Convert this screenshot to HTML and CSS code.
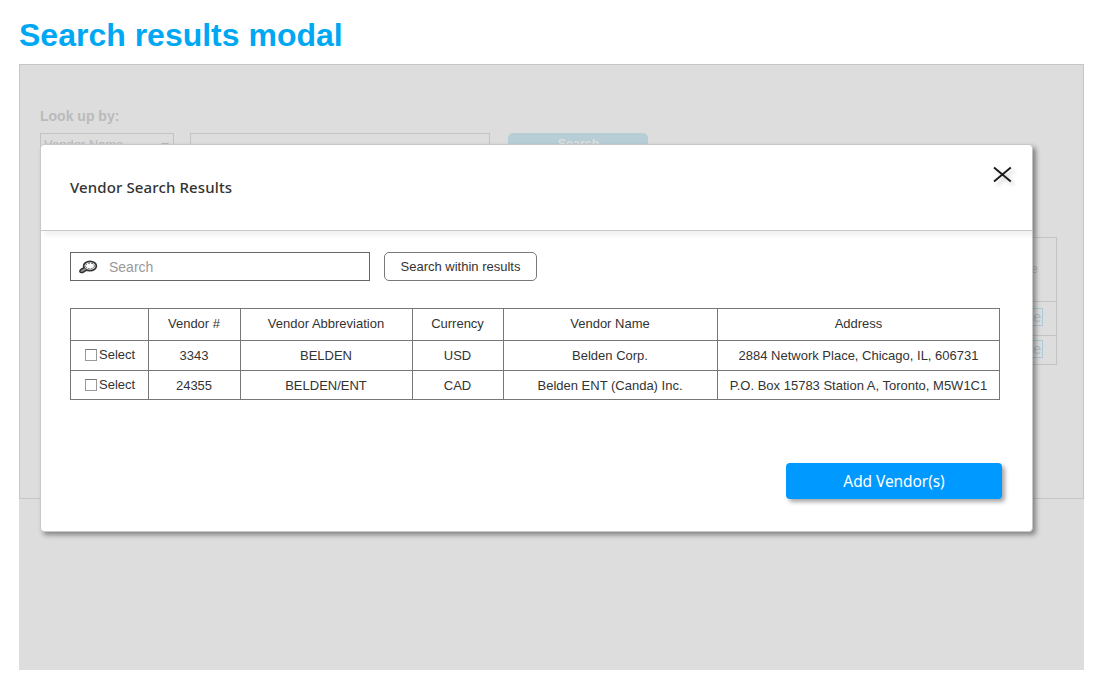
FILE: index.html
```html
<!DOCTYPE html>
<html lang="en">
<head>
<meta charset="utf-8">
<title>Search results modal</title>
<link rel="stylesheet" href="styles.css">
</head>
<body>
<h1 class="page-title">Search results modal</h1>
<main class="stage">
  <section class="panel">
    <div class="lookup-label">Look up by:</div>
    <div class="lookup-row">
      <div class="lookup-select"><span>Vendor Name</span><i class="caret"></i></div>
      <div class="lookup-input"></div>
      <div class="lookup-button">Search</div>
    </div>
    <div class="vendor-list">
      <div class="vendor-head">Remove</div>
      <div class="vendor-row first"><span class="remove">Remove</span></div>
      <div class="vendor-row"><span class="remove">Remove</span></div>
    </div>
  </section>
  <section class="modal">
    <header class="modal-header">
      <h2 class="modal-title">Vendor Search Results</h2>
      <svg class="close" width="20" height="18" viewBox="0 0 20 18"><path d="M2 2.6 18.8 16.4M18.8 2.6 2 16.4" fill="none" stroke="#1a1a1a" stroke-width="1.9"/></svg>
    </header>
    <div class="modal-body">
      <div class="search-row">
        <div class="search-box">
          <svg class="search-icon" width="20" height="14" viewBox="0 0 20 14"><ellipse cx="11" cy="6" rx="6.4" ry="4.6" fill="#fff" stroke="#333" stroke-width="1.7"/><ellipse cx="11" cy="5.9" rx="4.4" ry="2.9" fill="none" stroke="#555" stroke-width="1" stroke-dasharray="2 1"/><path d="M5.2 7.8 2.3 9.2Q-.2 11.2 1.6 12.4 3.3 12.9 4.8 11.8L7.6 10" fill="#999" stroke="#333" stroke-width="1.5"/></svg>
          <span>Search</span>
        </div>
        <div class="within-button">Search within results</div>
      </div>
      <table class="results">
        <colgroup><col class="c-select"><col class="c-number"><col class="c-abbr"><col class="c-currency"><col class="c-name"><col class="c-address"></colgroup>
        <tr class="head"><th></th><th>Vendor #</th><th>Vendor Abbreviation</th><th>Currency</th><th>Vendor Name</th><th>Address</th></tr>
        <tr class="row-one"><td><div class="pick"><i class="check"></i>Select</div></td><td>3343</td><td>BELDEN</td><td>USD</td><td>Belden Corp.</td><td>2884 Network Place, Chicago, IL, 606731</td></tr>
        <tr class="row-two"><td><div class="pick"><i class="check"></i>Select</div></td><td>24355</td><td>BELDEN/ENT</td><td>CAD</td><td>Belden ENT (Canda) Inc.</td><td>P.O. Box 15783 Station A, Toronto, M5W1C1</td></tr>
      </table>
      <div class="add-button">Add Vendor(s)</div>
    </div>
  </section>
</main>
</body>
</html>
```
FILE: styles.css
```css
* { box-sizing: border-box; }
body {
  margin: 0;
  width: 1109px;
  height: 690px;
  overflow: hidden;
  background: #fff;
  color: #333;
  font: 13px/16px "Liberation Sans", Arial, sans-serif;
}
.page-title {
  margin: 0;
  height: 64px;
  padding: 16px 0 0 19px;
  color: #00a8f3;
  font-size: 32px;
  line-height: 38px;
  font-weight: bold;
}
.stage {
  position: relative;
  width: 1065px;
  height: 606px;
  margin-left: 19px;
  background: #ddd;
}
.panel {
  height: 435px;
  padding: 43px 26px 0 20px;
  border: 1px solid #c6c6c6;
  color: #bababa;
}
.lookup-label { height: 25px; font-size: 14px; font-weight: bold; }
.lookup-row { display: flex; height: 24px; }
.lookup-select {
  display: flex;
  justify-content: space-between;
  width: 134px;
  padding: 3px 4px 0 3px;
  border: 1px solid #c3c3c3;
}
.caret {
  margin-top: 6px;
  width: 0;
  height: 0;
  border: 4px solid transparent;
  border-top-color: #bababa;
}
.lookup-input { width: 300px; margin-left: 16px; border: 1px solid #c3c3c3; }
.lookup-button {
  width: 140px;
  margin-left: 18px;
  padding: 3px 0 0 1px;
  border-radius: 5px;
  background: #b8ced7;
  color: #dedede;
  font-size: 12.5px;
  font-weight: bold;
  text-align: center;
}
.vendor-list {
  height: 128px;
  margin-top: 80px;
  border: 1px solid #c3c3c3;
  text-align: right;
}
.vendor-head { height: 64px; padding: 23px 18px 0 0; border-bottom: 1px solid #c3c3c3; }
.vendor-row { height: 29px; padding: 4px 13px 0 0; }
.vendor-row.first { height: 34px; padding-top: 6px; border-bottom: 1px solid #c3c3c3; }
.remove {
  display: inline-block;
  height: 18px;
  padding: 0 1px;
  border: 1px solid #abcbd9;
  color: #b2c2c9;
  font-size: 14px;
  line-height: 16px;
}
.modal {
  position: absolute;
  left: 21px;
  top: 80px;
  width: 993px;
  height: 388px;
  border: 1px solid #c8c8c8;
  border-radius: 4px;
  background: #fff;
  box-shadow: 3px 3px 5px rgba(0, 0, 0, .4);
}
.modal-header {
  display: flex;
  justify-content: space-between;
  height: 86px;
  padding: 0 20px 0 29px;
  border-bottom: 1px solid #c8c8c8;
  box-shadow: 3px 5px 4px rgba(0, 0, 0, .05);
}
.modal-title {
  margin: 32px 0 0;
  font: 500 15px/20px "Noto Sans", "Open Sans", sans-serif;
  letter-spacing: .12px;
}
.close { margin-top: 20px; filter: drop-shadow(3px 3px 2px rgba(0, 0, 0, .2)); }
.modal-body { padding: 21px 30px 0 29px; }
.search-row { display: flex; gap: 14px; }
.search-box {
  display: flex;
  width: 300px;
  height: 29px;
  padding: 6px 0 0 8px;
  border: 1px solid #666;
  color: #999;
  font-size: 14px;
}
.search-icon { margin: 1px 10px 0 0; }
.within-button {
  width: 153px;
  height: 29px;
  border: 1px solid #797979;
  border-radius: 5px;
  text-align: center;
  line-height: 27px;
}
.results {
  width: 930px;
  height: 92px;
  margin-top: 27px;
  border: solid #777;
  border-width: 1px 0 0 1px;
  border-spacing: 0;
  table-layout: fixed;
}
.results th, .results td {
  padding: 0 1px 0 0;
  border: solid #777;
  border-width: 0 1px 1px 0;
  font-weight: normal;
  text-align: center;
  vertical-align: middle;
  white-space: nowrap;
}
.results .head th { padding-bottom: 1px; }
.results .row-two td { padding-top: 1px; }
.results th:last-child, .results td:last-child { padding-right: 0; }
.head { height: 32px; }
.row-one { height: 30px; }
.row-two { height: 29px; }
.c-select { width: 78px; }
.c-number { width: 92px; }
.c-abbr { width: 172px; }
.c-currency { width: 91px; }
.c-name { width: 214px; }
.c-address { width: 282px; }
.pick { display: flex; gap: 2px; padding: 0 0 2px 14px; }
.check {
  width: 12px;
  height: 12px;
  margin-top: 2px;
  border: 1px solid #999;
  border-top-color: #777;
}
.add-button {
  width: 216px;
  height: 36px;
  margin: 63px 0 0 auto;
  border-radius: 4px;
  background: #09f;
  color: #fff;
  box-shadow: 3px 3px 4px rgba(0, 0, 0, .35);
  font: 15.5px/37px "Noto Sans", "Open Sans", sans-serif;
  letter-spacing: -.08px;
  text-align: center;
}
```
